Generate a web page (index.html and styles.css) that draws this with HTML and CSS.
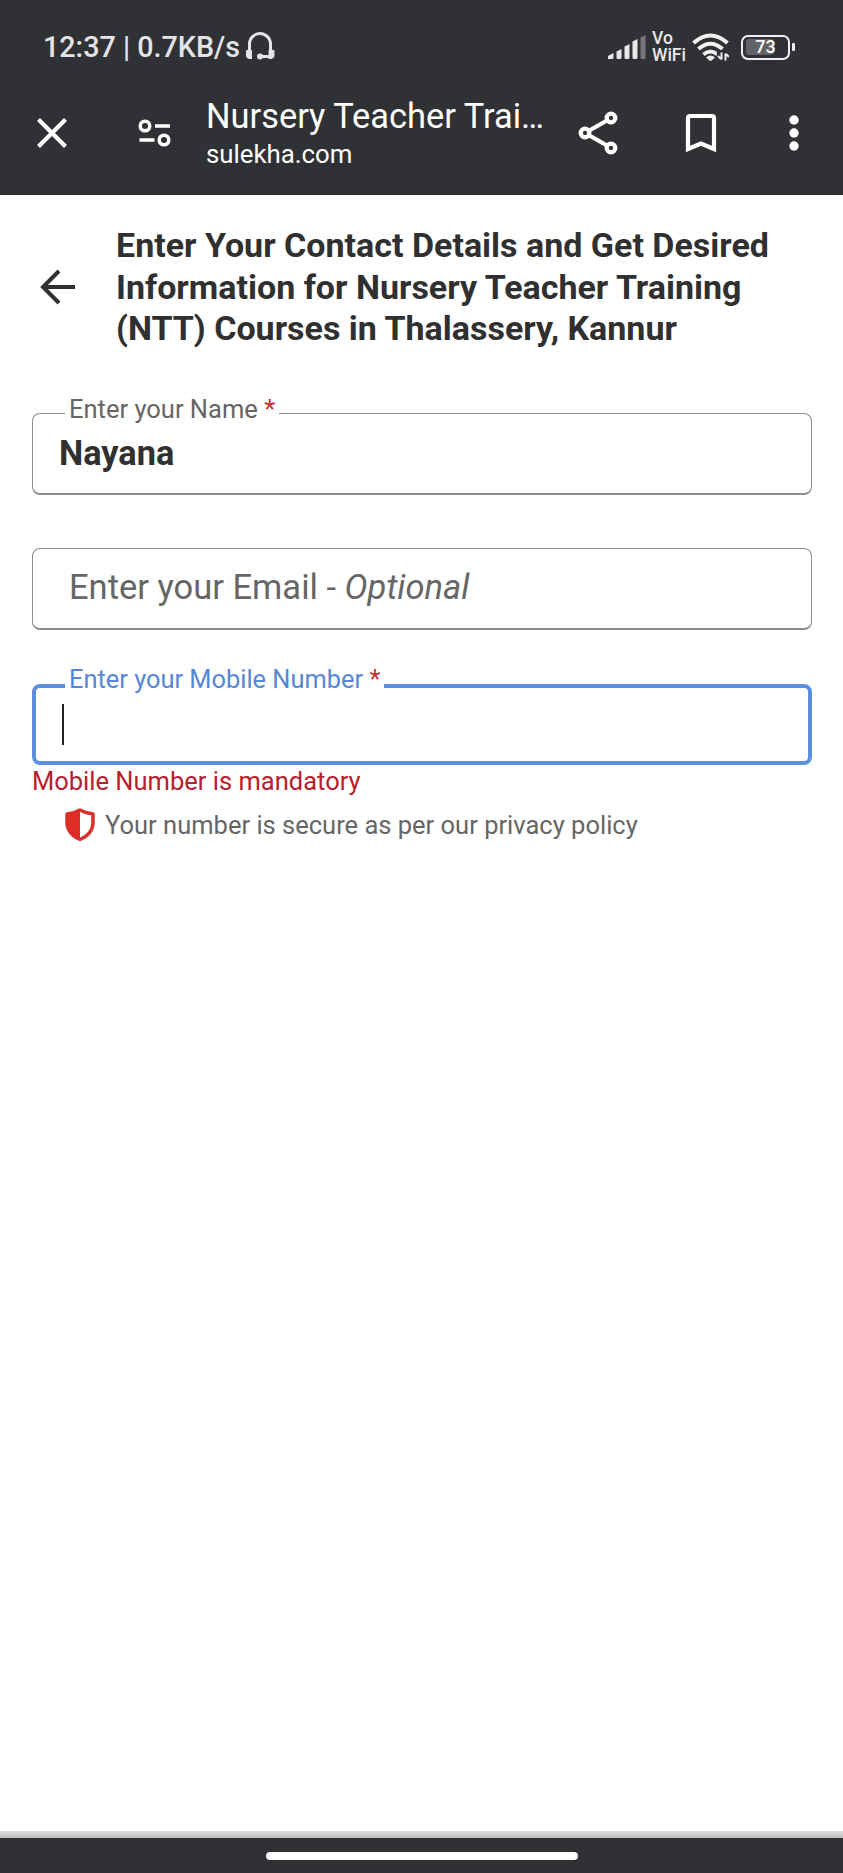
FILE: index.html
```html
<!DOCTYPE html>
<html lang="en">
<head>
<meta charset="utf-8">
<title>Nursery Teacher Training</title>
<link rel="stylesheet" href="styles.css">
</head>
<body>
<div class="screen">
  <header class="chrome">
    <div class="status">
      <span class="clock">12:37 | 0.7KB/s</span>
      <svg class="headset" width="30" height="30" viewBox="0 0 30 30"><path d="M4.500 22V13a10.500 10.500 0 0 1 21 0v9M15 25.500h9" fill="none" stroke="#e4e4e6" stroke-width="3"/><path d="M1 19.500q4-2 6 0v8.500h-3q-3-1-3-3zM29.500 19.500q-4-2-6 0v8.500h3q3-1 3-3z" fill="#e4e4e6"/><circle cx="15" cy="25.500" r="3" fill="#e4e4e6"/></svg>
      <svg class="signal" width="38" height="25" viewBox="0 0 38 25"><g fill="#e8e8ea"><path d="M0 24v-3l5.500-3v4.500q0 1.500-1.500 1.500zM8.500 16.500l5-2.500v8.500q0 1.500-1.500 1.500h-2q-1.500 0-1.500-1.500zM16.500 11.500l5-2.500v13.500q0 1.500-1.500 1.500h-2q-1.500 0-1.500-1.500zM24.500 6.500l5-2.500v18.500q0 1.500-1.500 1.500h-2q-1.500 0-1.500-1.500z"/><path d="M32.500 2.500l5-2.500v22.500q0 1.500-1.500 1.500h-2q-1.500 0-1.500-1.500z" fill="#77787b"/></g></svg>
      <span class="vowifi"><span>Vo</span><span>WiFi</span></span>
      <svg class="wifi" width="37" height="28" viewBox="0 0 37 28"><g fill="none" stroke="#f0f0f1" stroke-width="4"><path d="M1.500 10q17-15 34 0M6.500 16q12-10.500 24 0M11.500 21.500q7-6 14 0"/></g><path d="M14 24.500q4.500-4 9 0l-4 3.500h-1z" fill="#f0f0f1"/><path d="M25 17h12v11H24.500z" fill="#303134"/><path d="M29.500 19.500v7M29 26l-3-3M33.500 27.500v-7M34 21l3 3" stroke="#f0f0f1" stroke-width="2" fill="none"/></svg>
      <span class="battery"><span class="cell"><span class="level"></span><span class="pct">73</span></span><span class="tip"></span></span>
    </div>
    <div class="toolbar">
      <svg class="close" width="30" height="30" viewBox="0 0 30 30"><path d="M1.500 1.500l27 27M28.500 1.500l-27 27" stroke="#fff" stroke-width="4.200"/></svg>
      <svg class="tune" width="34" height="28" viewBox="0 0 34 28"><g fill="none" stroke="#fff" stroke-width="3.500"><circle cx="7" cy="7" r="4.800"/><path d="M17 7h15M1.500 21h15"/><circle cx="26" cy="21" r="4.800"/></g></svg>
      <div class="page"><div class="title">Nursery Teacher Trai…</div><div class="host">sulekha.com</div></div>
      <svg class="share" width="40" height="44" viewBox="0 0 40 44"><g fill="none" stroke="#fff" stroke-width="4.300"><path d="M10.500 20L29 9.500M10.500 24L29 34.500"/><circle cx="7" cy="22" r="4.300"/><circle cx="33" cy="7" r="4.300"/><circle cx="33" cy="37" r="4.300"/></g></svg>
      <svg class="mark" width="32" height="40" viewBox="0 0 32 40"><path d="M3 36V5q0-2 2-2h22q2 0 2 2v31L16 30.500z" fill="none" stroke="#fff" stroke-width="4.200"/></svg>
      <svg class="more" width="10" height="36" viewBox="0 0 10 36"><g fill="#fff"><circle cx="5" cy="5" r="4.700"/><circle cx="5" cy="18" r="4.700"/><circle cx="5" cy="31" r="4.700"/></g></svg>
    </div>
  </header>
  <main class="content">
    <div class="intro">
      <svg class="back" width="36" height="36" viewBox="0 0 36 36"><path d="M35 18H4M19 2L3 18l16 16" fill="none" stroke="#303030" stroke-width="4"/></svg>
      <h1>Enter Your Contact Details and Get Desired<br>Information for Nursery Teacher Training<br>(NTT) Courses in Thalassery, Kannur</h1>
    </div>
    <div class="field name"><span class="label"><span class="label-text">Enter your Name</span> <b>*</b></span><span class="value">Nayana</span></div>
    <div class="field email"><span class="placeholder">Enter your Email - <i>Optional</i></span></div>
    <div class="field mobile"><span class="label"><span class="label-text">Enter your Mobile Number</span> <b>*</b></span><span class="caret"></span></div>
    <p class="error">Mobile Number is mandatory</p>
    <div class="secure">
      <svg width="32" height="34" viewBox="0 0 32 34"><path d="M16 2Q22 5.500 29 6V15Q28.500 26 16 31.500Q3.500 26 3 15V6Q10 5.500 16 2z" fill="#fff" stroke="#d9302c" stroke-width="3.500" stroke-linejoin="round"/><path d="M16 2V31.500Q3.500 26 3 15V6Q10 5.500 16 2z" fill="#df2c25"/></svg>
      <span>Your number is secure as per our privacy policy</span>
    </div>
  </main>
  <div class="shade"></div>
  <footer class="nav"><span class="handle"></span></footer>
</div>
</body>
</html>
```
FILE: styles.css
```css
* { box-sizing: border-box; }
body { margin: 0; background: #fff; font-family: Roboto, "Liberation Sans", sans-serif; }
svg { display: block; flex: none; }
.screen { width: 843px; height: 1873px; display: flex; flex-direction: column; overflow: hidden; white-space: nowrap; }
.chrome { height: 195px; background: #303134; color: #fff; border-bottom: 1px solid #282828; }
.status { height: 94px; padding-left: 43px; display: flex; align-items: center; }
.clock { width: 198px; font-size: 28.700px; font-weight: 500; line-height: 34px; color: #e4e4e6; }
.headset { margin: -2px 0 0 4px; }
.signal { margin: 0 6px 0 333px; }
.vowifi { width: 35px; display: flex; flex-direction: column; font-size: 17.500px; font-weight: 500; line-height: 17px; color: #e8e8ea; }
.wifi { margin-left: 5px; }
.battery { margin-left: 12px; display: flex; align-items: center; gap: 2px; }
.cell { width: 49px; height: 25px; border: 2.500px solid #f0f0f1; border-radius: 7px; padding: 2px 3px; display: grid; align-items: center; }
.level { grid-area: 1 / 1; width: 28px; height: 16px; border-radius: 3px; background: #616265; }
.pct { grid-area: 1 / 1; text-align: center; font-size: 18px; line-height: 16px; font-weight: 500; }
.tip { width: 3px; height: 8px; background: #f0f0f1; border-radius: 1px; }
.toolbar { height: 78px; display: flex; align-items: center; padding-left: 37px; }
.tune { margin-left: 71px; }
.page { width: 350px; margin: 1px 0 0 34px; }
.title { font-size: 34.400px; line-height: 40px; }
.host { font-size: 25.800px; line-height: 36px; }
.share { margin-left: 22px; }
.mark { margin-left: 67px; }
.more { margin-left: 72px; }
.content { flex: 1; padding: 30px 31px 0 32px; color: #303030; }
.intro { display: flex; align-items: center; padding-left: 8px; }
h1 { margin: 0 0 0 40px; font-size: 34px; line-height: 41.500px; font-weight: 700; }
.field { height: 82px; border: 1px solid #8d8d8d; border-bottom-width: 2px; border-radius: 8px; display: flex; align-items: center; position: relative; }
.label { position: absolute; top: -21px; left: 32px; background: #fff; padding: 0 4px; font-size: 25.500px; line-height: 32px; color: #666; }
.label b { color: #c53030; font-weight: 400; }
.name { margin-top: 63px; }
.value { margin-left: 26px; font-size: 34.300px; font-weight: 700; }
.email { margin-top: 53px; }
.placeholder { margin: -2px 0 0 36px; font-size: 34.500px; color: #666; }
.mobile { height: 81px; margin-top: 54px; border: 4px solid #5c8fdf; }
.mobile .label { top: -25px; left: 29px; font-size: 25.400px; color: #5787d5; }
.caret { width: 2px; height: 41px; margin-left: 26px; background: #222; }
.error { margin: 0; font-size: 25.500px; line-height: 32px; color: #b9202d; }
.secure { display: flex; align-items: center; gap: 9px; margin: 11px 0 0 32px; font-size: 25.500px; line-height: 34px; color: #666; }
.shade { height: 7px; background: linear-gradient(#dedee0, #bebfc1); }
.nav { height: 35px; background: #303134; display: flex; justify-content: center; align-items: flex-start; padding-top: 14px; }
.handle { width: 312px; height: 8px; border-radius: 4px; background: #fff; }
```
